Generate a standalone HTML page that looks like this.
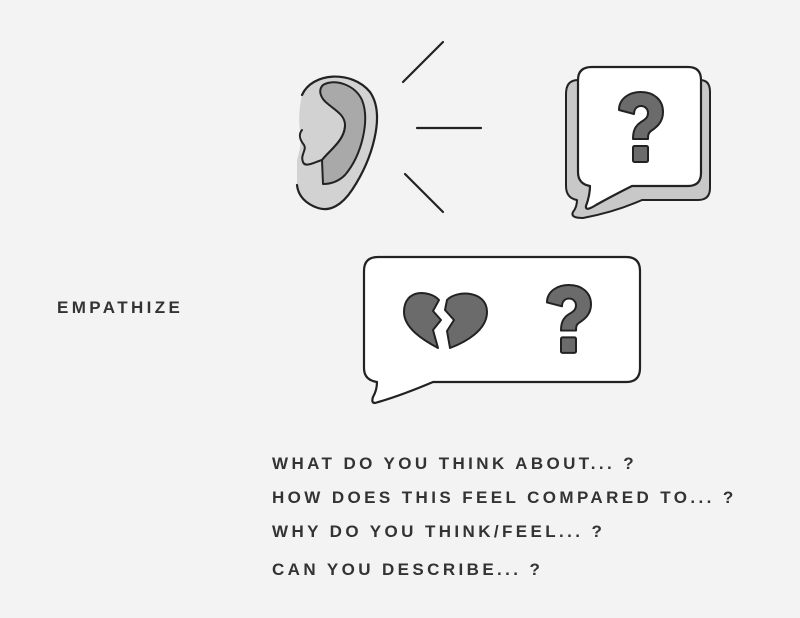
<!DOCTYPE html>
<html><head><style>
html,body{margin:0;padding:0;background:#f3f3f3;width:800px;height:618px;overflow:hidden;font-family:"Liberation Sans",sans-serif}
.t{position:absolute;font-weight:bold;color:#333;font-size:17px;letter-spacing:3.4px;white-space:nowrap}
</style></head><body>
<svg width="800" height="618" style="position:absolute;left:0;top:0" stroke-linejoin="round" stroke-linecap="round">
<path d="M302,95 C312,72 352,70 370,92 C386,115 372,160 352,190 C342,205 330,212 318,208 C306,204 298,196 297,185 L297,160 C300,150 302,140 300,130 C298,118 300,104 302,95 Z" fill="#d2d2d2"/>
<path d="M302,95 C312,72 352,70 370,92 C386,115 372,160 352,190 C342,205 330,212 318,208 C306,204 298,196 297,185" fill="none" stroke="#222" stroke-width="2.2"/>
<path d="M323,85 C335,78 355,85 362,100 C370,120 362,155 345,175 C338,182 330,184 323,184 L322,160 C330,150 345,140 345,125 C345,115 335,110 328,104 C320,98 318,90 323,85 Z" fill="#a9a9a9" stroke="#222" stroke-width="2"/>
<path d="M345,125 C345,140 330,150 322,160 C315,162 305,168 303,162 C300,155 307,150 304,145 C300,140 298,135 302,130" fill="none" stroke="#222" stroke-width="2"/>
<g stroke="#222" stroke-width="2.2"><line x1="403" y1="82" x2="443" y2="42"/><line x1="417" y1="128" x2="481" y2="128"/><line x1="405" y1="174" x2="443" y2="212"/></g>
<path d="M578,80 H700 Q710,80 710,92 V188 Q710,200 698,200 H642 Q615,212 583,218 Q570,218 573,212 Q577,207 577,200 Q566,198 566,186 V94 Q566,80 578,80 Z" fill="#c8c8c8" stroke="#222" stroke-width="2"/>
<path d="M592,67 H688 Q701,67 701,80 V173 Q701,186 688,186 H632 Q612,196 596,205 Q585,212 586,206 Q590,195 590,186 Q578,184 578,172 V80 Q578,67 592,67 Z" fill="#fff" stroke="#222" stroke-width="2.2"/>
<g transform="translate(618,92)">
<path d="M1,18 C1,6 12,0 23,0 C36,0 45,8 45,20 C45,30 39,35 33,39 C30,41 30,44 30,47 H15 C15,39 17,34 23,30 C28,27 30,25 30,21 C30,17 27,14 23,14 C19,14 16,17 16,22 Z" fill="#6b6b6b" stroke="#222" stroke-width="2"/>
<rect x="15" y="54" width="15" height="16" rx="1.5" fill="#6b6b6b" stroke="#222" stroke-width="2"/></g>
<path d="M378,257 H626 Q640,257 640,271 V368 Q640,382 626,382 H433 Q400,396 375,403 Q371,403 373,397 Q377,390 377,382 Q364,380 364,368 V271 Q364,257 378,257 Z" fill="#fff" stroke="#222" stroke-width="2.2"/>
<path d="M439,300 C430,290 404,288 404,312 C404,328 423,340 438,348 L433,330 L441,320 L433,311 Z" fill="#6b6b6b" stroke="#222" stroke-width="2"/>
<path d="M447,300 C456,290 487,290 487,312 C487,330 466,342 450,348 L447,331 L454,320 L445,310 Z" fill="#6b6b6b" stroke="#222" stroke-width="2"/>
<g transform="translate(546,285) scale(1,0.97)">
<path d="M1,18 C1,6 12,0 23,0 C36,0 45,8 45,20 C45,30 39,35 33,39 C30,41 30,44 30,47 H15 C15,39 17,34 23,30 C28,27 30,25 30,21 C30,17 27,14 23,14 C19,14 16,17 16,22 Z" fill="#6b6b6b" stroke="#222" stroke-width="2"/>
<rect x="15" y="54" width="15" height="16" rx="1.5" fill="#6b6b6b" stroke="#222" stroke-width="2"/></g>
</svg>
<div class="t" style="left:57px;top:298px">EMPATHIZE</div>
<div class="t" style="left:272px;top:454px">WHAT DO YOU THINK ABOUT... ?</div>
<div class="t" style="left:272px;top:488px">HOW DOES THIS FEEL COMPARED TO... ?</div>
<div class="t" style="left:272px;top:522px">WHY DO YOU THINK/FEEL... ?</div>
<div class="t" style="left:272px;top:560px">CAN YOU DESCRIBE... ?</div>
</body></html>
